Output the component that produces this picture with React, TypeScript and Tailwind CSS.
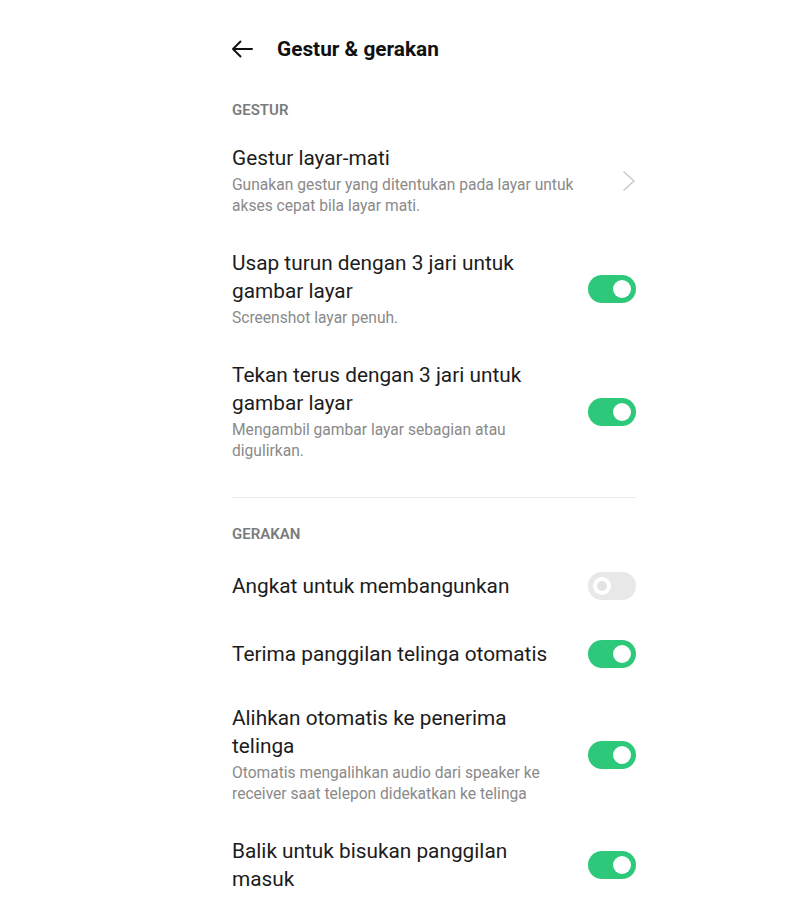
import React from "react";

const font = { fontFamily: "Roboto, 'Noto Sans', sans-serif" };

function Toggle({ on }: { on: boolean }) {
  if (on) {
    return (
      <div className="flex h-[28px] w-[48px] shrink-0 items-center justify-end rounded-full bg-[#2ec87a] pr-[5px]">
        <div className="h-[18px] w-[18px] rounded-full bg-white" />
      </div>
    );
  }
  return (
    <div className="flex h-[28px] w-[48px] shrink-0 items-center justify-start rounded-full bg-[#e8e8e8] pl-[5px]">
      <div className="flex h-[18px] w-[18px] items-center justify-center rounded-full bg-white">
        <div className="h-[10px] w-[10px] rounded-full bg-[#e3e3e3]" />
      </div>
    </div>
  );
}

function Chevron() {
  return (
    <svg width="14" height="20" viewBox="0 0 14 20" className="shrink-0">
      <path d="M2 1 L12 10 L2 19" fill="none" stroke="#c9c9c9" strokeWidth="1.5" strokeLinecap="round" strokeLinejoin="round" />
    </svg>
  );
}

type Item = {
  title: string;
  sub?: string;
  toggle?: boolean;
  chevron?: boolean;
  single?: boolean;
};

function Row({ item }: { item: Item }) {
  return (
    <div className={`flex items-center justify-between ${item.single ? "py-[20px]" : "py-4"}`}>
      <div className={item.chevron ? "w-[362px]" : "w-[328px]"}>
        <div className="text-[20.8px] leading-[28px] text-[#1c1c1c]">{item.title}</div>
        {item.sub && (
          <div className="mt-[3px] text-[15.6px] leading-[21px] text-[#8a8a8a]">{item.sub}</div>
        )}
      </div>
      {item.chevron ? <Chevron /> : <Toggle on={!!item.toggle} />}
    </div>
  );
}

export default function App() {
  const gestur: Item[] = [
    {
      title: "Gestur layar-mati",
      sub: "Gunakan gestur yang ditentukan pada layar untuk akses cepat bila layar mati.",
      chevron: true,
    },
    {
      title: "Usap turun dengan 3 jari untuk gambar layar",
      sub: "Screenshot layar penuh.",
      toggle: true,
    },
    {
      title: "Tekan terus dengan 3 jari untuk gambar layar",
      sub: "Mengambil gambar layar sebagian atau digulirkan.",
      toggle: true,
    },
  ];
  const gerakan: Item[] = [
    { title: "Angkat untuk membangunkan", toggle: false, single: true },
    { title: "Terima panggilan telinga otomatis", toggle: true, single: true },
    {
      title: "Alihkan otomatis ke penerima telinga",
      sub: "Otomatis mengalihkan audio dari speaker ke receiver saat telepon didekatkan ke telinga",
      toggle: true,
    },
    { title: "Balik untuk bisukan panggilan masuk", toggle: true },
  ];

  return (
    <div className="min-h-[921px] w-[800px] overflow-hidden bg-white" style={font}>
      <div className="ml-[231px] w-[405px] pt-[35px]">
        <div className="flex h-[28px] items-center">
          <svg width="22" height="20" viewBox="0 0 22 20" className="shrink-0">
            <path d="M21 10 H2 M9.5 2.5 L2 10 L9.5 17.5" fill="none" stroke="#111" strokeWidth="1.9" strokeLinecap="round" strokeLinejoin="round" />
          </svg>
          <div className="ml-[24px] text-[20.8px] font-bold leading-[28px] text-[#111]">Gestur &amp; gerakan</div>
        </div>

        <div className="mt-[37px] pl-[1px] text-[15px] font-semibold leading-[20px] text-[#7b7b7b]">GESTUR</div>
        <div className="mt-2 pl-[1px]">
          {gestur.map((it) => (
            <Row key={it.title} item={it} />
          ))}
        </div>

        <div className="ml-[1px] mt-[19px] h-px bg-[#ececec]" />

        <div className="mt-[26px] pl-[1px] text-[15px] font-semibold leading-[20px] text-[#7b7b7b]">GERAKAN</div>
        <div className="mt-2 pl-[1px]">
          {gerakan.map((it) => (
            <Row key={it.title} item={it} />
          ))}
        </div>
      </div>
    </div>
  );
}
